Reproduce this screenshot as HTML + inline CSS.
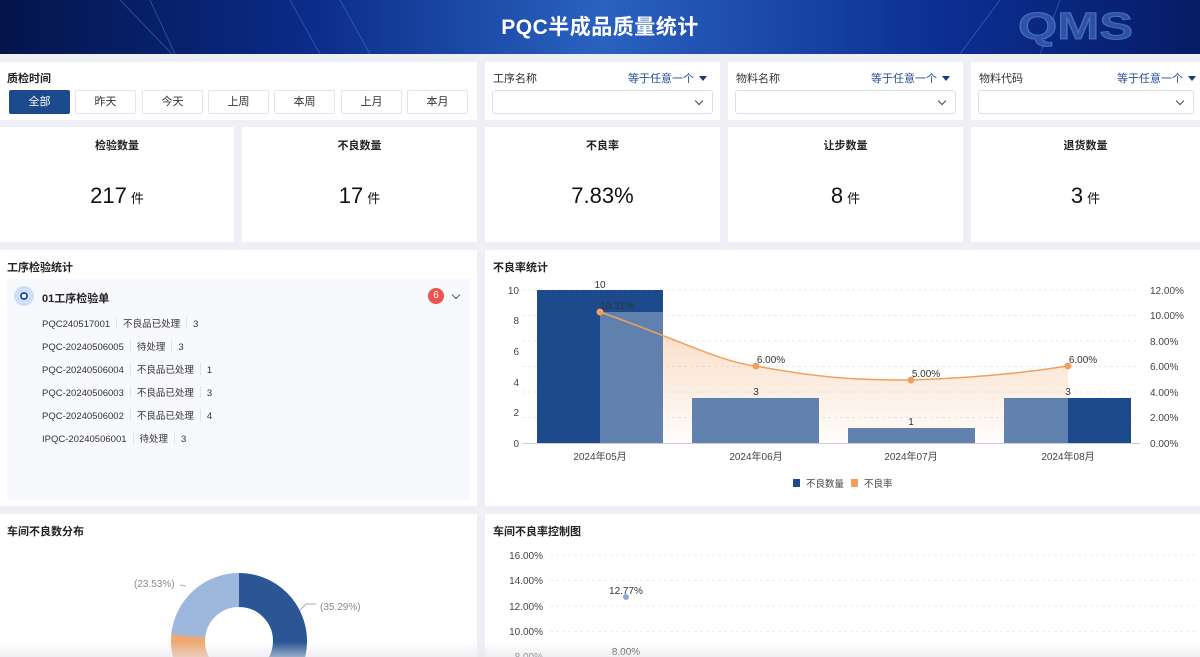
<!DOCTYPE html>
<html><head><meta charset="utf-8"><style>
*{margin:0;padding:0;box-sizing:border-box}
body{width:1200px;height:657px;overflow:hidden;background:#eef0f5;font-family:"Liberation Sans","Noto Sans CJK SC",sans-serif;color:#222;position:relative}
.hd{position:absolute;left:0;top:0;width:1200px;height:54px;background:linear-gradient(90deg,#04154a 0%,#0a2a86 25%,#2a62c0 50%,#0c2f94 78%,#061c66 100%);overflow:hidden}
.hd h1{position:absolute;left:0;right:0;top:11px;text-align:center;color:#fff;font-size:21px;font-weight:bold;letter-spacing:0.5px}
.p{position:absolute;background:#fff}
.t{font-size:11px;font-weight:bold;color:#222;position:absolute}
.btn{position:absolute;top:28px;width:61px;height:24px;border:1px solid #e3e5ea;border-radius:2px;font-size:11px;text-align:center;line-height:22px;color:#333;background:#fff}
.btn.on{background:#1c4a8c;color:#fff;border-color:#1c4a8c}
.sel{position:absolute;left:7px;right:7px;top:28px;height:24px;border:1px solid #dcdfe6;border-radius:3px}
.sel:after{content:"";position:absolute;right:10px;top:7px;width:5px;height:5px;border-right:1.2px solid #445;border-bottom:1.2px solid #445;transform:rotate(45deg)}
.eq{position:absolute;right:13px;top:8px;font-size:11px;color:#2a4f94}
.eq:after{content:"";display:inline-block;margin-left:5px;border-left:4px solid transparent;border-right:4px solid transparent;border-top:5px solid #1c3a74;vertical-align:1px}
.card .t{left:0;right:0;text-align:center;top:10px}
.num{position:absolute;left:0;right:0;top:56px;text-align:center;font-size:22px;color:#111}
.num small{font-size:13px;margin-left:4px}
.row{position:absolute;left:42px;font-size:9.5px;color:#333;white-space:nowrap}
.row i{display:inline-block;width:1px;height:12px;background:#e2e4ea;margin:0 6px;vertical-align:-2px}
</style></head><body>
<div class="hd">
<svg width="1200" height="54" style="position:absolute;left:0;top:0">
<g stroke="#4a78d8" stroke-width="1" opacity=".5" fill="none">
<line x1="120" y1="0" x2="172" y2="54"/><line x1="150" y1="0" x2="175" y2="54"/>
<line x1="290" y1="0" x2="320" y2="54"/><line x1="340" y1="0" x2="370" y2="54"/>
<line x1="960" y1="54" x2="1000" y2="0"/><line x1="1040" y1="54" x2="1060" y2="0"/>
</g>
<text x="1018" y="39" font-family="Liberation Sans,sans-serif" font-size="38" font-weight="bold" fill="#3a62b4" fill-opacity=".75" stroke="#6a8fd6" stroke-width="1" stroke-opacity=".6" textLength="115" lengthAdjust="spacingAndGlyphs">QMS</text>
</svg>
<h1>PQC半成品质量统计</h1>
</div>

<div class="p" style="left:0;top:62px;width:477px;height:58px">
<div class="t" style="left:7px;top:8px">质检时间</div>
<div class="btn on" style="left:9px">全部</div>
<div class="btn" style="left:75px">昨天</div>
<div class="btn" style="left:142px">今天</div>
<div class="btn" style="left:208px">上周</div>
<div class="btn" style="left:274px">本周</div>
<div class="btn" style="left:341px">上月</div>
<div class="btn" style="left:407px">本月</div>
</div>
<div class="p" style="left:485px;top:62px;width:235px;height:58px"><div style="position:absolute;left:8px;top:8px;font-size:11px;color:#333">工序名称</div><div class="eq">等于任意一个</div><div class="sel"></div></div>
<div class="p" style="left:728px;top:62px;width:235px;height:58px"><div style="position:absolute;left:8px;top:8px;font-size:11px;color:#333">物料名称</div><div class="eq">等于任意一个</div><div class="sel"></div></div>
<div class="p" style="left:971px;top:62px;width:229px;height:58px"><div style="position:absolute;left:8px;top:8px;font-size:11px;color:#333">物料代码</div><div class="eq" style="right:4px">等于任意一个</div><div class="sel" style="right:6px"></div></div>

<div class="p card" style="left:0;top:127px;width:234px;height:115px"><div class="t">检验数量</div><div class="num">217<small>件</small></div></div>
<div class="p card" style="left:242px;top:127px;width:235px;height:115px"><div class="t">不良数量</div><div class="num">17<small>件</small></div></div>
<div class="p card" style="left:485px;top:127px;width:235px;height:115px"><div class="t">不良率</div><div class="num">7.83%</div></div>
<div class="p card" style="left:728px;top:127px;width:235px;height:115px"><div class="t">让步数量</div><div class="num">8<small>件</small></div></div>
<div class="p card" style="left:971px;top:127px;width:229px;height:115px"><div class="t">退货数量</div><div class="num">3<small>件</small></div></div>

<div class="p" style="left:0;top:250px;width:477px;height:256px">
<div class="t" style="left:7px;top:9px">工序检验统计</div>
<div style="position:absolute;left:7px;top:29px;width:463px;height:221px;background:#f8f9fc"></div>
<div style="position:absolute;left:14px;top:36px;width:20px;height:20px;border-radius:50%;background:#cfe0fa"></div>
<div style="position:absolute;left:20px;top:42px;width:8px;height:8px;border-radius:50%;border:2px solid #2a56a8;background:#fff"></div>
<div style="position:absolute;left:42px;top:40px;font-size:11px;font-weight:bold;color:#222">01工序检验单</div>
<div style="position:absolute;left:428px;top:38px;width:16px;height:16px;border-radius:50%;background:#ef5350;color:#fff;font-size:10px;text-align:center;line-height:16px">6</div>
<div style="position:absolute;left:453px;top:42px;width:6px;height:6px;border-right:1.2px solid #555;border-bottom:1.2px solid #555;transform:rotate(45deg)"></div>
<div class="row" style="top:66px">PQC240517001<i></i>不良品已处理<i></i>3</div>
<div class="row" style="top:89px">PQC-20240506005<i></i>待处理<i></i>3</div>
<div class="row" style="top:112px">PQC-20240506004<i></i>不良品已处理<i></i>1</div>
<div class="row" style="top:135px">PQC-20240506003<i></i>不良品已处理<i></i>3</div>
<div class="row" style="top:158px">PQC-20240506002<i></i>不良品已处理<i></i>4</div>
<div class="row" style="top:181px">IPQC-20240506001<i></i>待处理<i></i>3</div>
</div>

<div class="p" style="left:485px;top:250px;width:715px;height:256px">
<div class="t" style="left:8px;top:9px">不良率统计</div>
</div>
<svg width="1200" height="657" style="position:absolute;left:0;top:0" font-family="Liberation Sans,Noto Sans CJK SC,sans-serif">
<defs><linearGradient id="ag" x1="0" y1="0" x2="0" y2="1"><stop offset="0" stop-color="#f3a060" stop-opacity=".4"/><stop offset="1" stop-color="#f3a060" stop-opacity=".02"/></linearGradient></defs>
<g stroke="#e8eaef" stroke-dasharray="3,3"><line x1="522" y1="290" x2="1140" y2="290"/><line x1="522" y1="315.5" x2="1140" y2="315.5"/><line x1="522" y1="341" x2="1140" y2="341"/><line x1="522" y1="366.5" x2="1140" y2="366.5"/><line x1="522" y1="392" x2="1140" y2="392"/><line x1="522" y1="417.5" x2="1140" y2="417.5"/></g>
<line x1="522" y1="443.5" x2="1140" y2="443.5" stroke="#ccd" />
<path d="M600,312 C680,340 720,362 756,366 C830,380 870,380 911,380 C980,378 1030,372 1068,366 L1068,443 L600,443 Z" fill="url(#ag)"/>
<g fill="#1c4a8c"><rect x="537" y="290" width="126" height="153"/><rect x="692" y="398" width="127" height="45"/><rect x="848" y="428" width="127" height="15"/><rect x="1004" y="398" width="127" height="45"/></g>
<g fill="#fff" opacity=".3"><rect x="600" y="312" width="63" height="131"/><rect x="692" y="398" width="127" height="45"/><rect x="848" y="428" width="127" height="15"/><rect x="1004" y="398" width="64" height="45"/></g>
<path d="M600,312 C680,340 720,362 756,366 C830,380 870,380 911,380 C980,378 1030,372 1068,366" stroke="#f0a05c" stroke-width="1.5" fill="none"/>
<g fill="#f0a05c"><circle cx="600" cy="312" r="3.5"/><circle cx="756" cy="366" r="3.5"/><circle cx="911" cy="380" r="3.5"/><circle cx="1068" cy="366" r="3.5"/></g>
<g font-size="10" fill="#333" text-anchor="middle"><text x="600" y="288">10</text><text x="617" y="309">10.31%</text><text x="771" y="363">6.00%</text><text x="926" y="377">5.00%</text><text x="1083" y="363">6.00%</text><text x="756" y="395">3</text><text x="911" y="425">1</text><text x="1068" y="395">3</text></g>
<g font-size="10" fill="#444" text-anchor="end"><text x="519" y="294">10</text><text x="519" y="324">8</text><text x="519" y="355">6</text><text x="519" y="386">4</text><text x="519" y="416">2</text><text x="519" y="447">0</text></g>
<g font-size="10" fill="#444"><text x="1150" y="294">12.00%</text><text x="1150" y="319">10.00%</text><text x="1150" y="345">8.00%</text><text x="1150" y="370">6.00%</text><text x="1150" y="396">4.00%</text><text x="1150" y="421">2.00%</text><text x="1150" y="447">0.00%</text></g>
<g font-size="10" fill="#444" text-anchor="middle"><text x="600" y="460">2024年05月</text><text x="756" y="460">2024年06月</text><text x="911" y="460">2024年07月</text><text x="1068" y="460">2024年08月</text></g>
<rect x="793" y="479" width="7" height="8" fill="#1c4a8c"/><text x="806" y="487" font-size="9.5" fill="#444">不良数量</text>
<rect x="851" y="479" width="7" height="8" fill="#f0a05c"/><text x="864" y="487" font-size="9.5" fill="#444">不良率</text>
</svg>

<div class="p" style="left:0;top:514px;width:477px;height:143px"><div class="t" style="left:7px;top:9px">车间不良数分布</div></div>
<div class="p" style="left:485px;top:514px;width:715px;height:143px"><div class="t" style="left:8px;top:9px">车间不良率控制图</div></div>
<svg width="1200" height="657" style="position:absolute;left:0;top:0" font-family="Liberation Sans,sans-serif">
<g fill="none" stroke-width="34" transform="rotate(-90 239 641)">
<circle cx="239" cy="641" r="51" stroke="#2a5696" stroke-dasharray="113.1 400"/>
<circle cx="239" cy="641" r="51" stroke="#eeaa72" stroke-dasharray="0 200 50 400"/>
<circle cx="239" cy="641" r="51" stroke="#9db8dc" stroke-dasharray="0 245.1 75.4 400"/>
</g>
<g font-size="10" fill="#888"><text x="134" y="587">(23.53%)</text><text x="320" y="610">(35.29%)</text></g>
<polyline points="180,585 186,586" stroke="#aaa" fill="none"/><polyline points="300,610 306,604 316,604" stroke="#aaa" fill="none"/>
<g stroke="#eceef2" stroke-dasharray="3,3"><line x1="550" y1="555" x2="1195" y2="555"/><line x1="550" y1="580.5" x2="1195" y2="580.5"/><line x1="550" y1="606" x2="1195" y2="606"/><line x1="550" y1="631.5" x2="1195" y2="631.5"/></g>
<g font-size="10" fill="#444" text-anchor="end"><text x="543" y="559">16.00%</text><text x="543" y="584">14.00%</text><text x="543" y="610">12.00%</text><text x="543" y="635">10.00%</text><text x="543" y="660">8.00%</text></g>
<circle cx="626" cy="597" r="3" fill="#8eaad6"/><text x="626" y="594" font-size="10" fill="#333" text-anchor="middle">12.77%</text>
<text x="626" y="655" font-size="10" fill="#333" text-anchor="middle">8.00%</text>
</svg>
<div style="position:absolute;left:0;top:642px;width:1200px;height:15px;background:linear-gradient(rgba(230,232,238,0),rgba(228,230,236,.6))"></div>
</body></html>
